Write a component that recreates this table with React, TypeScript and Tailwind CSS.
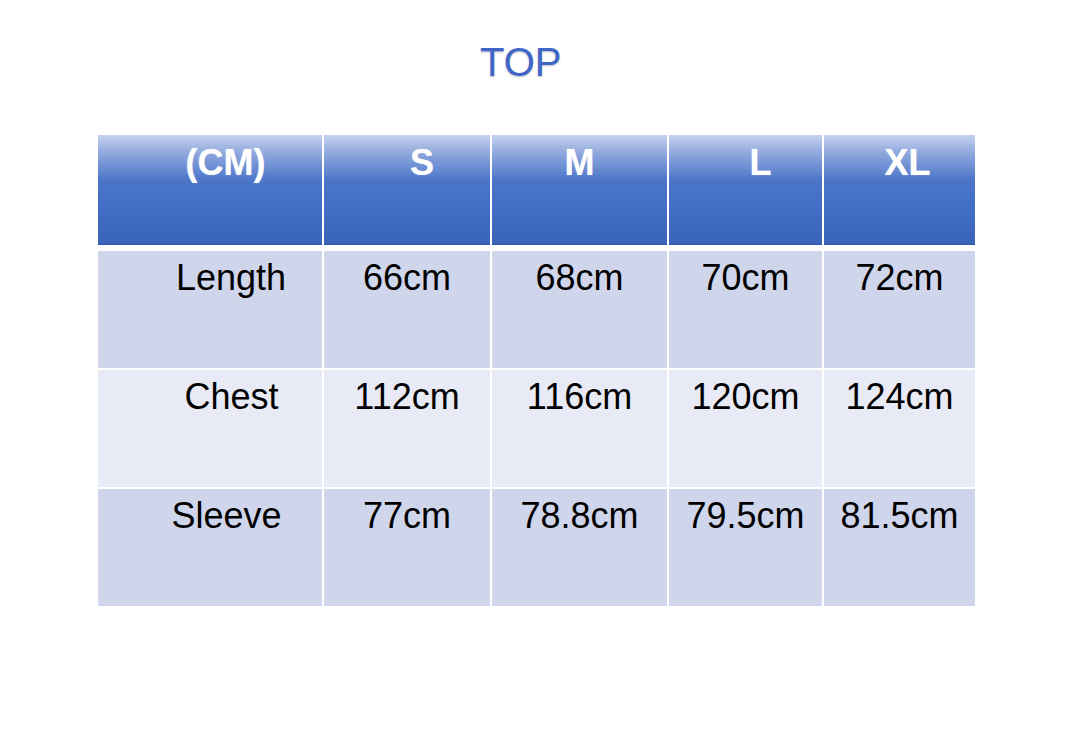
const columns = ['(CM)', 'S', 'M', 'L', 'XL']
const headerPad = ['pl-[31px]', 'pl-[30px]', 'pl-0', 'pl-[30px]', 'pl-[16px]']

const rows = [
  { label: 'Length', values: ['66cm', '68cm', '70cm', '72cm'], bg: 'bg-[#cfd5ea]', pad: 'pl-[42px]' },
  { label: 'Chest', values: ['112cm', '116cm', '120cm', '124cm'], bg: 'bg-[#e8ebf5]', pad: 'pl-[43px]' },
  { label: 'Sleeve', values: ['77cm', '78.8cm', '79.5cm', '81.5cm'], bg: 'bg-[#cfd5ea]', pad: 'pl-[33px]' },
]

export default function App() {
  return (
    <div className="min-h-[737px] w-[1080px] bg-white font-['Liberation_Sans',Arial,sans-serif]">
      <div className="pt-[42px] pl-[480px]">
        <h1 className="text-[40px] leading-[40px] text-[#3f66c7] [text-shadow:0_1px_2px_rgba(60,60,80,0.35)]">
          TOP
        </h1>
      </div>

      <div className="ml-[98px] mt-[53px] w-[877px]">
        <div className="grid grid-cols-[224px_166px_175px_153px_151px] gap-x-[2px]">
          {columns.map((col, i) => (
            <div
              key={col}
              className={`h-[110px] border-b border-[#2f55ae] bg-[linear-gradient(to_bottom,#c6d2ed_0%,#8ba5dc_18%,#4b75c9_42%,#4270c6_65%,#3a62b9_100%)] pt-[10px] text-center text-[36px] font-bold leading-[36px] text-white [text-shadow:0_0_1px_rgba(255,255,255,0.6)] ${headerPad[i]}`}
            >
              {col}
            </div>
          ))}
        </div>

        <div className="mt-[6px] flex flex-col gap-y-[2px]">
          {rows.map((row) => (
            <div key={row.label} className="grid grid-cols-[224px_166px_175px_153px_151px] gap-x-[2px]">
              <div className={`h-[117px] pt-[9px] text-center text-[36px] leading-[36px] text-black ${row.bg} ${row.pad}`}>
                {row.label}
              </div>
              {row.values.map((v) => (
                <div key={v} className={`h-[117px] pt-[9px] text-center text-[36px] leading-[36px] text-black ${row.bg}`}>
                  {v}
                </div>
              ))}
            </div>
          ))}
        </div>
      </div>
    </div>
  )
}
